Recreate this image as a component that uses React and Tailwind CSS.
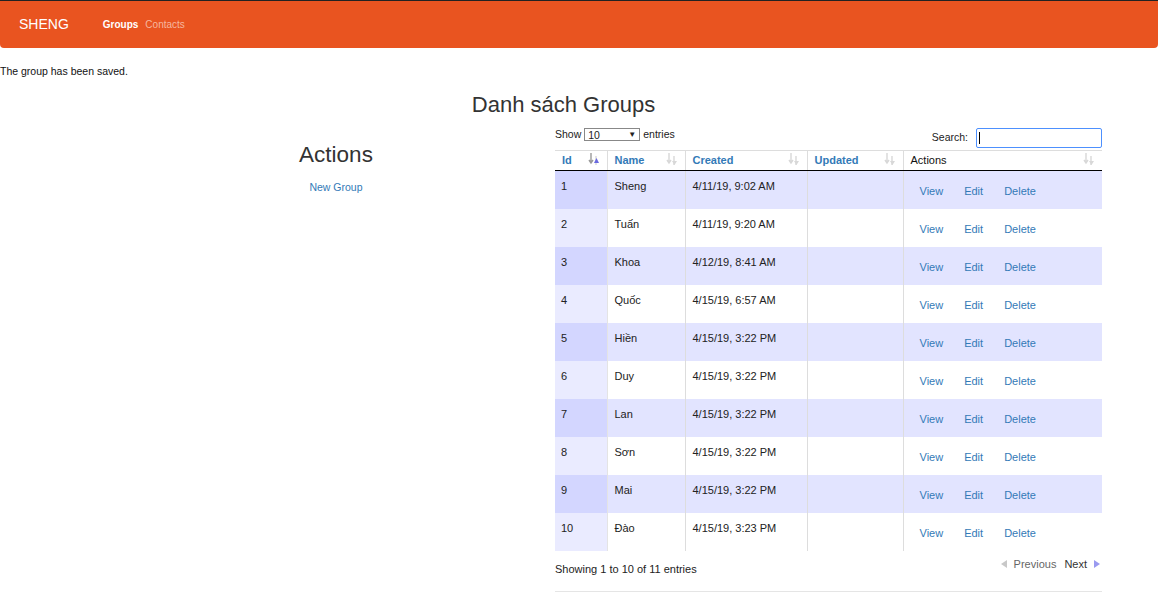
import React from 'react';

const rows = [
  { id: 1, name: 'Sheng', created: '4/11/19, 9:02 AM' },
  { id: 2, name: 'Tuấn', created: '4/11/19, 9:20 AM' },
  { id: 3, name: 'Khoa', created: '4/12/19, 8:41 AM' },
  { id: 4, name: 'Quốc', created: '4/15/19, 6:57 AM' },
  { id: 5, name: 'Hiền', created: '4/15/19, 3:22 PM' },
  { id: 6, name: 'Duy', created: '4/15/19, 3:22 PM' },
  { id: 7, name: 'Lan', created: '4/15/19, 3:22 PM' },
  { id: 8, name: 'Sơn', created: '4/15/19, 3:22 PM' },
  { id: 9, name: 'Mai', created: '4/15/19, 3:22 PM' },
  { id: 10, name: 'Đào', created: '4/15/19, 3:23 PM' },
];

// little double arrow shown in datatables headers
function SortIcon({ active }) {
  return (
    <svg width="12" height="14" viewBox="0 0 12 14" className="shrink-0">
      <path d="M3 1v9M1 8l2 3 2-3" stroke={active ? '#9a9a9a' : '#d8d8d8'} strokeWidth="1.4" fill="none" />
      <path d="M8 4v9" stroke="#d8d8d8" strokeWidth="1.4" fill="none" />
      {active ? (
        <path d="M6 11h5L8.5 6z" fill="#6a6adf" />
      ) : (
        <path d="M6 9l2.5 4L11 9z" fill="#d8d8d8" />
      )}
    </svg>
  );
}

function Th({ children, w, link = true, active = false, last = false }) {
  return (
    <th
      className={`${w} h-[20px] border-t border-[#ddd] ${last ? '' : 'border-r'} border-b border-b-black px-[7px] text-left align-middle`}
    >
      <div className="flex items-center justify-between">
        <span className={link ? 'font-bold text-[#337ab7]' : 'font-normal text-[#111]'}>{children}</span>
        <span className="-mt-[4px]">
          <SortIcon active={active} />
        </span>
      </div>
    </th>
  );
}

export default function App() {
  return (
    <div className="min-h-[611px] w-[1158px] bg-white text-[11px] text-[#222]" style={{ fontFamily: '"Liberation Sans", Arial, sans-serif' }}>
      <div className="border-t border-[#222]">
        <nav className="flex h-[47px] items-center rounded-b-[4px] bg-[#e95420] pl-[19px]">
          <span className="text-[14px] text-white">SHENG</span>
          <span className="ml-[34px] text-[10px] font-bold text-white">Groups</span>
          <span className="ml-[7px] text-[10px] text-[#f6b79f]">Contacts</span>
        </nav>
      </div>

      <p className="mt-[16px] text-[10.5px] leading-[14px] text-[#111]">The group has been saved.</p>

      <h1 className="mt-[12px] pr-[31px] text-center text-[22px] leading-[30px] text-[#333]">Danh sách Groups</h1>

      <div className="mt-[6px] flex">
        <div className="ml-[117px] w-[438px] pt-[14px] text-center">
          <h2 className="text-[22.5px] leading-[30px] text-[#333]">Actions</h2>
          <a className="mt-[10px] block text-[10.5px] text-[#337ab7]">New Group</a>
        </div>

        <div className="w-[547px]">
          <div className="flex items-start justify-between text-[10.5px]">
            <div className="flex items-center gap-[3px] pt-[1px]">
              <span>Show</span>
              <div className="flex h-[13px] w-[56px] items-center justify-between border border-[#888] px-[3px] leading-none">
                <span>10</span>
                <span className="text-[8px]">▼</span>
              </div>
              <span>entries</span>
            </div>
            <div className="flex items-center gap-[8px] pt-[2px]">
              <span>Search:</span>
              <div className="h-[20px] w-[126px] rounded-[2px] border border-[#4d90fe] bg-white pl-[2px] pt-[3px]">
                <div className="h-[12px] w-px bg-black" />
              </div>
            </div>
          </div>

          <table className="mt-[2px] w-full border-collapse">
            <thead>
              <tr>
                <Th w="w-[52px]" active>Id</Th>
                <Th w="w-[78px]">Name</Th>
                <Th w="w-[122px]">Created</Th>
                <Th w="w-[96px]">Updated</Th>
                <Th link={false} last>Actions</Th>
              </tr>
            </thead>
            <tbody>
              {rows.map((r, i) => {
                const odd = i % 2 === 0;
                return (
                  <tr key={r.id} className={odd ? 'bg-[#e2e4ff]' : 'bg-white'}>
                    <td className={`h-[38px] border-r border-[#e4e4e4] px-[6px] pt-[7px] align-top ${odd ? 'bg-[#d3d6ff]' : 'bg-[#eaebff]'}`}>{r.id}</td>
                    <td className="border-r border-[#ddd] px-[7px] pt-[7px] align-top">{r.name}</td>
                    <td className="border-r border-[#ddd] px-[7px] pt-[7px] align-top">{r.created}</td>
                    <td className="border-r border-[#ddd] px-[7px] pt-[7px] align-top"></td>
                    <td className="pl-[16px] pt-[12px] align-top">
                      <div className="flex gap-[21px] text-[#337ab7]">
                        <a>View</a>
                        <a>Edit</a>
                        <a>Delete</a>
                      </div>
                    </td>
                  </tr>
                );
              })}
            </tbody>
          </table>

          <div className="flex justify-between">
            <span className="mt-[10px]">Showing 1 to 10 of 11 entries</span>
            <div className="mt-[1px] flex items-center text-[#333]">
              <svg width="10" height="10" viewBox="0 0 10 10" className="mr-[5px]">
                <path d="M8 1v8L2 5z" fill="#c8c8c8" />
              </svg>
              <span className="text-[#666]">Previous</span>
              <span className="ml-[8px]">Next</span>
              <svg width="10" height="10" viewBox="0 0 10 10" className="ml-[5px]">
                <path d="M2 1v8l6-4z" fill="#9a9af0" />
              </svg>
            </div>
          </div>

          <div className="mt-[14px] border-t border-[#e5e5e5]" />
        </div>
      </div>
    </div>
  );
}
